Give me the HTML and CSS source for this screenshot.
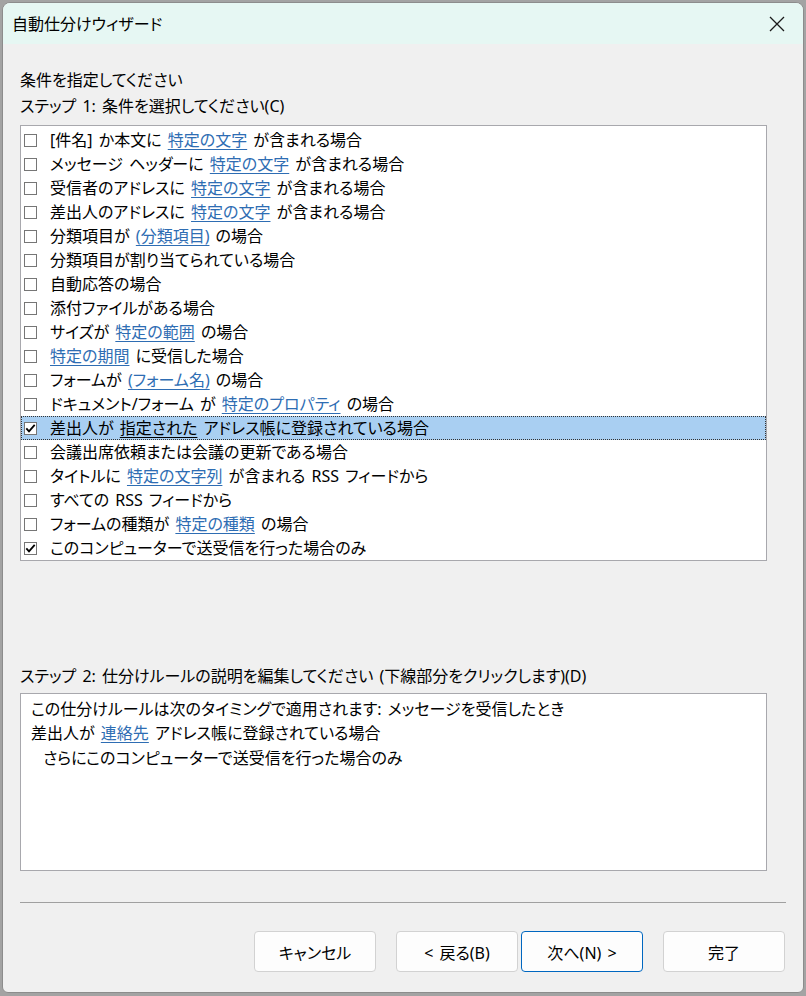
FILE: index.html
```html
<!DOCTYPE html>
<html lang="ja">
<head>
<meta charset="utf-8">
<title>自動仕分けウィザード</title>
<link rel="stylesheet" href="styles.css">
</head>
<body>
<div class="dialog">
  <div class="titlebar">
    <span class="title">自動仕分けウィザード</span>
    <svg class="close" width="16" height="16" viewBox="0 0 16 16"><path d="M1 1 L15 15 M15 1 L1 15" stroke="#1a1a1a" stroke-width="1.3" fill="none"/></svg>
  </div>
  <div class="content">
    <div class="heading">条件を指定してください</div>
    <div class="label step1">ステップ 1: 条件を選択してください(C)</div>
    <div class="list">
      <div class="row"><span class="cb"></span><span>[件名] か本文に <a>特定の文字</a> が含まれる場合</span></div>
      <div class="row"><span class="cb"></span><span>メッセージ ヘッダーに <a>特定の文字</a> が含まれる場合</span></div>
      <div class="row"><span class="cb"></span><span>受信者のアドレスに <a>特定の文字</a> が含まれる場合</span></div>
      <div class="row"><span class="cb"></span><span>差出人のアドレスに <a>特定の文字</a> が含まれる場合</span></div>
      <div class="row"><span class="cb"></span><span>分類項目が <a>(分類項目)</a> の場合</span></div>
      <div class="row"><span class="cb"></span><span>分類項目が割り当てられている場合</span></div>
      <div class="row"><span class="cb"></span><span>自動応答の場合</span></div>
      <div class="row"><span class="cb"></span><span>添付ファイルがある場合</span></div>
      <div class="row"><span class="cb"></span><span>サイズが <a>特定の範囲</a> の場合</span></div>
      <div class="row"><span class="cb"></span><span><a>特定の期間</a> に受信した場合</span></div>
      <div class="row"><span class="cb"></span><span>フォームが <a>(フォーム名)</a> の場合</span></div>
      <div class="row"><span class="cb"></span><span>ドキュメント/フォーム が <a>特定のプロパティ</a> の場合</span></div>
      <div class="row selected"><span class="cb checked"><svg width="13" height="13" viewBox="0 0 13 13"><path d="M2.3 6.3 L5 9.3 L10.7 2.8" stroke="#000" stroke-width="1.8" fill="none"/></svg></span><span>差出人が <a>指定された</a> アドレス帳に登録されている場合</span></div>
      <div class="row"><span class="cb"></span><span>会議出席依頼または会議の更新である場合</span></div>
      <div class="row"><span class="cb"></span><span>タイトルに <a>特定の文字列</a> が含まれる RSS フィードから</span></div>
      <div class="row"><span class="cb"></span><span>すべての RSS フィードから</span></div>
      <div class="row"><span class="cb"></span><span>フォームの種類が <a>特定の種類</a> の場合</span></div>
      <div class="row"><span class="cb checked"><svg width="13" height="13" viewBox="0 0 13 13"><path d="M2.3 6.3 L5 9.3 L10.7 2.8" stroke="#000" stroke-width="1.8" fill="none"/></svg></span><span>このコンピューターで送受信を行った場合のみ</span></div>
    </div>
    <div class="label step2">ステップ 2: 仕分けルールの説明を編集してください (下線部分をクリックします)(D)</div>
    <div class="desc">
      <div class="line">この仕分けルールは次のタイミングで適用されます: メッセージを受信したとき</div>
      <div class="line">差出人が <a>連絡先</a> アドレス帳に登録されている場合</div>
      <div class="line indent">さらにこのコンピューターで送受信を行った場合のみ</div>
    </div>
    <div class="sep"></div>
    <div class="buttons">
      <button class="btn">キャンセル</button>
      <button class="btn back">&lt; 戻る(B)</button>
      <button class="btn primary">次へ(N) &gt;</button>
      <button class="btn finish">完了</button>
    </div>
  </div>
</div>
</body>
</html>
```

FILE: styles.css
```css
* { box-sizing: border-box; }
html, body {
  margin: 0;
  padding: 0;
}
body {
  background: #a3a3a3;
  width: 806px;
  height: 996px;
  overflow: hidden;
  font-family: "Noto Sans", "Noto Sans CJK JP", sans-serif;
  font-size: 16px;
  font-feature-settings: "palt";
  word-spacing: 2px;
  color: #000;
}
.dialog {
  margin: 2px 0 0 2px;
  width: 802px;
  height: 991px;
  background: #f0f0f0;
  border: 1px solid #8c8c8c;
  border-radius: 8px 8px 6px 6px;
  overflow: hidden;
  display: flex;
  flex-direction: column;
}
.titlebar {
  height: 41px;
  background: #e6f7f3;
  display: flex;
  align-items: center;
  justify-content: space-between;
  padding: 0 18px 0 9px;
  flex-shrink: 0;
}
.title {
  line-height: 20px;
}
.close { display: block; }
.content {
  padding: 0 0 0 17px;
  display: flex;
  flex-direction: column;
}
.heading {
  margin-top: 24px;
  line-height: 24px;
  height: 24px;
}
.label { line-height: 24px; height: 24px; }
.step1 { margin-top: 2px; }
.list {
  margin-top: 7px;
  width: 747px;
  height: 436px;
  background: #fff;
  border: 1px solid #a8a8ad;
  padding-top: 2px;
}
.row {
  height: 24px;
  line-height: 24px;
  display: flex;
  align-items: center;
  padding-left: 3px;
  white-space: nowrap;
}
.row.selected {
  background: #a9cff2;
  outline: 1px dotted #333;
  outline-offset: -1px;
}
.row.selected a { color: #000; }
.cb {
  width: 13px;
  height: 13px;
  border: 1px solid #767676;
  background: #fff;
  margin-right: 13px;
  flex-shrink: 0;
  position: relative;
}
.cb svg {
  position: absolute;
  left: -1px;
  top: -1px;
}
a {
  color: #2e6db3;
  text-decoration: underline;
  text-underline-offset: 3px;
}
.step2 { margin-top: 103px; }
.desc {
  margin-top: 5px;
  width: 747px;
  height: 178px;
  background: #fff;
  border: 1px solid #a8a8ad;
  padding: 3px 0 0 10px;
}
.line {
  line-height: 24px;
  height: 24px;
  white-space: nowrap;
}
.line.indent { padding-left: 12px; margin-top: 1px; }
.sep {
  margin-top: 31px;
  width: 766px;
  height: 1px;
  background: #a0a0a0;
}
.buttons {
  margin-top: 28px;
  display: flex;
  padding-left: 234px;
}
.btn {
  width: 122px;
  height: 41px;
  background: #fdfdfd;
  border: 1px solid #d2d2d2;
  border-radius: 4px;
  font-family: "Noto Sans", "Noto Sans CJK JP", sans-serif;
  font-size: 16px;
  font-feature-settings: "palt";
  word-spacing: 2px;
  color: #000;
  padding: 0;
}
.btn.back { margin-left: 20px; }
.btn.primary {
  margin-left: 3px;
  border: 1px solid #0067c0;
}
.btn.finish { margin-left: 20px; }
```
